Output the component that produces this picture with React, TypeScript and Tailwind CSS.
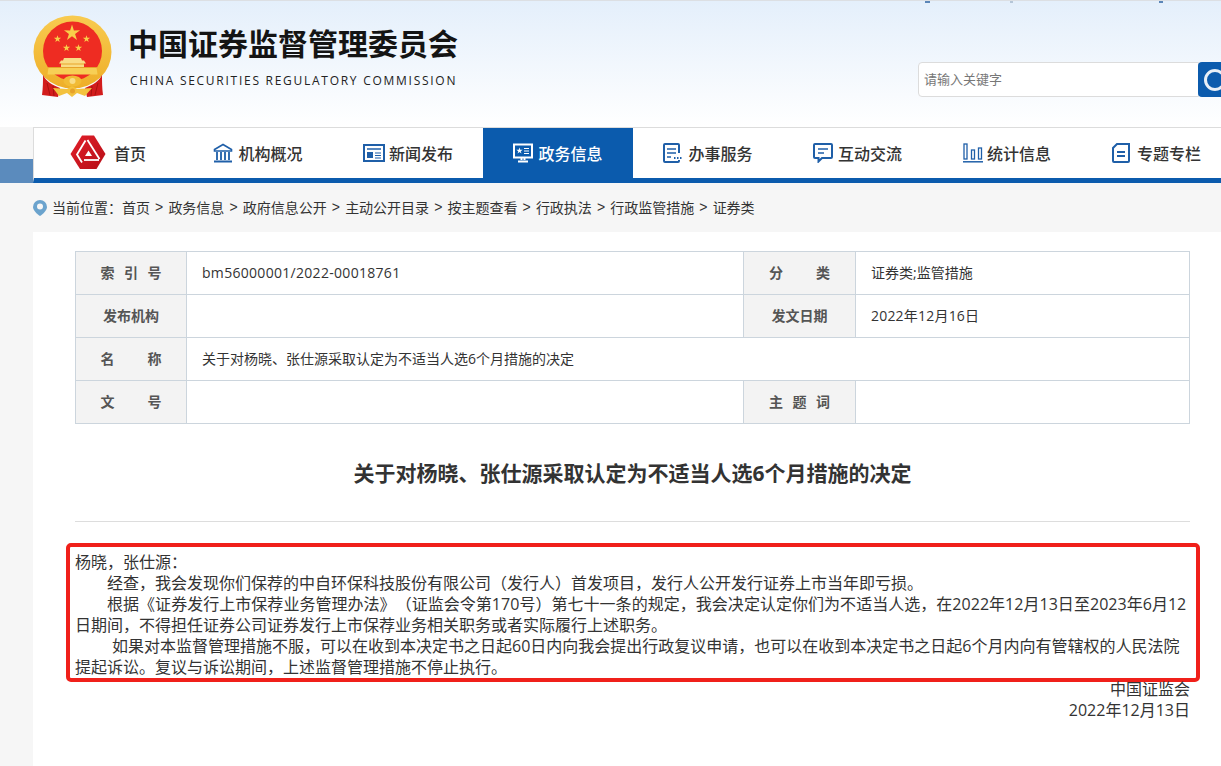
import React from 'react';

const cjk = 'font-["Open_Sans","Noto_Sans_CJK_SC",sans-serif]';

const starPoints = (cx: number, cy: number, r: number) => {
    const pts: string[] = [];
    for (let i = 0; i < 10; i++) {
        const rad = i % 2 === 0 ? r : r * 0.38;
        const a = (Math.PI / 5) * i - Math.PI / 2;
        pts.push(`${(cx + rad * Math.cos(a)).toFixed(2)},${(cy + rad * Math.sin(a)).toFixed(2)}`);
    }
    return pts.join(' ');
};

const Emblem = () => (
    <svg width="80" height="84" viewBox="0 0 80 84" className="shrink-0">
        <defs>
            <linearGradient id="gold" x1="0" y1="0" x2="0" y2="1">
                <stop offset="0" stopColor="#f8cb50" />
                <stop offset="1" stopColor="#eeae28" />
            </linearGradient>
        </defs>
        <ellipse cx="39.5" cy="37" rx="39" ry="36.500" fill="url(#gold)" />
        <circle cx="39.5" cy="36" r="29.5" fill="#ee2c22" />
        <polygon points={starPoints(39, 18, 8.5)} fill="#f8cf4a" />
        <polygon points={starPoints(24.5, 24, 3.8)} fill="#f8cf4a" />
        <polygon points={starPoints(53.5, 24, 3.8)} fill="#f8cf4a" />
        <polygon points={starPoints(33.5, 33, 3.8)} fill="#f8cf4a" />
        <polygon points={starPoints(45.5, 33, 3.8)} fill="#f8cf4a" />
        {/* gate */}
        <path d="M31 43h17l1 2.500h2l2 3h-2v3.500H28v-3.500h-2l2-3h2z" fill="#f9dc85" />
        <path d="M15.500 52h48l1 7.500H14.500z" fill="#f7cf55" />
        <path d="M28 49h23" stroke="#e8a52b" strokeWidth="1" />
        <path d="M16 52.500h47" stroke="#e6a22a" strokeWidth="1" />
        {/* drapes */}
        <path d="M10 60c3 6 9 10 17 13l-2 9-16-2c1-7 1-14 1-20z" fill="#d21c1c" />
        <path d="M69 60c-3 6-9 10-17 13l2 9 16-2c-1-7-1-14-1-20z" fill="#d21c1c" />
        <path d="M14 68l3 12M20 71l1 10M65 68l-3 12M59 71l-1 10" stroke="#a9120f" strokeWidth="1" />
        {/* ornament */}
        <path d="M20 73l14 1 5-3 5 3 15-1-7 8-8-3-5 4-5-4-8 3z" fill="#f3c23e" />
        <ellipse cx="39.500" cy="66" rx="9" ry="5.500" fill="#f1bb35" />
        <circle cx="39.500" cy="66" r="3" fill="#f9dc85" />
        <circle cx="39.500" cy="76" r="2.500" fill="#e6a22a" />
    </svg>
);

const CsrcLogo = () => (
    <svg width="39" height="35" viewBox="3 3.500 39 35" className="shrink-0">
        <defs>
            <linearGradient id="logoRed" x1="0" y1="0" x2="1" y2="1">
                <stop offset="0" stopColor="#e2202a" />
                <stop offset="1" stopColor="#b60d16" />
            </linearGradient>
        </defs>
        <path d="M15 4h12l11.500 18.500-9 15H13l-9.500-15z" fill="url(#logoRed)" />
        <path d="M18.500 9 10 23l5 8" fill="none" stroke="#fff" strokeWidth="1.800" />
        <path d="M20.500 8.500 32.500 27.500" fill="none" stroke="#fff" strokeWidth="1.800" />
        <path d="M32 28.500H17" fill="none" stroke="#fff" strokeWidth="1.800" />
        <path d="M21.500 19 25 24.500H18z" fill="#fff" />
    </svg>
);

const stroke = { fill: 'none', stroke: 'currentColor', strokeWidth: 2 };

const BankIcon = () => (
    <svg width="20" height="20" viewBox="0 0 20 20" className="shrink-0">
        <path d="M10 1.500 1.500 6.500v1.500h17V6.500z" {...stroke} strokeWidth={1.6} />
        <path d="M4 9v8M8 9v8M12 9v8M16 9v8" {...stroke} strokeWidth={1.8} />
        <path d="M1 18.500h18" {...stroke} />
    </svg>
);
const NewsIcon = () => (
    <svg width="22" height="18" viewBox="0 0 22 18" className="shrink-0">
        <rect x="1" y="1" width="20" height="16" {...stroke} />
        <path d="M4 5h14" {...stroke} strokeWidth={1.5} />
        <rect x="4" y="8" width="6" height="6" fill="currentColor" />
        <path d="M12 9h6M12 11.500h6M12 14h6" {...stroke} strokeWidth={1.2} />
    </svg>
);
const ScreenIcon = () => (
    <svg width="20" height="20" viewBox="0 0 20 20" className="shrink-0">
        <rect x="1" y="1.500" width="18" height="13" {...stroke} />
        <polygon points={starPoints(6.5, 7.8, 3.4)} fill="currentColor" />
        <path d="M11 5.500h5M11 8h5M11 10.500h5" {...stroke} strokeWidth={1.2} />
        <path d="M8.500 15v2M11.500 15v2M5 18.500h10" {...stroke} />
    </svg>
);
const ServiceIcon = () => (
    <svg width="21" height="20" viewBox="0 0 21 20" className="shrink-0">
        <path d="M16 10V2a1 1 0 0 0-1-1H2a1 1 0 0 0-1 1v16a1 1 0 0 0 1 1h13a1 1 0 0 0 1-1v-1" {...stroke} />
        <path d="M4 6h9M4 10h9M4 14h4" {...stroke} strokeWidth={1.6} />
        <path d="M11 15h1.500M14 15h1.500M17 15h1.500" {...stroke} strokeWidth={1.8} />
    </svg>
);
const ChatIcon = () => (
    <svg width="20" height="20" viewBox="0 0 20 20" className="shrink-0">
        <path d="M2 1h16a1 1 0 0 1 1 1v12a1 1 0 0 1-1 1H9l-3.500 3.500V15H2a1 1 0 0 1-1-1V2a1 1 0 0 1 1-1z" {...stroke} />
        <path d="M5 6h10M5 10h6" {...stroke} strokeWidth={1.6} />
    </svg>
);
const ChartIcon = () => (
    <svg width="20" height="20" viewBox="0 0 20 20" className="shrink-0">
        <rect x="1" y="1" width="3" height="15" {...stroke} strokeWidth={1.3} />
        <rect x="8.500" y="7" width="3" height="9" {...stroke} strokeWidth={1.3} />
        <rect x="15.500" y="5" width="3" height="11" {...stroke} strokeWidth={1.3} />
        <path d="M0 18.800h20" {...stroke} strokeWidth={1.5} />
    </svg>
);
const DocIcon = () => (
    <svg width="18" height="20" viewBox="0 0 18 20" className="shrink-0">
        <path d="M5 1h12v17a1 1 0 0 1-1 1H2a1 1 0 0 1-1-1V5z" {...stroke} />
        <path d="M5 9h8M5 13h8" {...stroke} strokeWidth={2} />
    </svg>
);

const navItems: { label: string; icon: React.ReactNode; gap: string; active?: boolean }[] = [
    { label: '首页', icon: <CsrcLogo />, gap: 'gap-[5px]' },
    { label: '机构概况', icon: <BankIcon />, gap: 'gap-[5px]' },
    { label: '新闻发布', icon: <NewsIcon />, gap: 'gap-[4px]' },
    { label: '政务信息', icon: <ScreenIcon />, gap: 'gap-[5px]', active: true },
    { label: '办事服务', icon: <ServiceIcon />, gap: 'gap-[4px]' },
    { label: '互动交流', icon: <ChatIcon />, gap: 'gap-[5px] pr-[1px]' },
    { label: '统计信息', icon: <ChartIcon />, gap: 'gap-[4px] pr-[2px]' },
    { label: '专题专栏', icon: <DocIcon />, gap: 'gap-[7px] pr-[3px]' },
];

const crumbs = ['首页', '政务信息', '政府信息公开', '主动公开目录', '按主题查看', '行政执法', '行政监管措施', '证券类'];

const labelCell = 'bg-[#f3f3f3] border border-[#ccd5dd] pb-[2px] text-center text-[14px] font-bold text-[#555]';
const valueCell = 'border border-[#ccd5dd] pl-[15px] pb-[2px] text-[14px] text-[#333]';

// spreads a short label's characters over a fixed width
const Spread = ({ chars }: { chars: string }) => (
    <div className="mx-auto w-[61px] flex justify-between">
        {chars.split('').map((c) => (
            <span key={c}>{c}</span>
        ))}
    </div>
);

export default function App() {
    return (
        <div className={`w-[1221px] h-[766px] overflow-hidden bg-[#f6f6f6] [text-spacing-trim:space-all] ${cjk}`}>
            {/* header */}
            <header className="relative h-[127px] border-t border-[#dcdfe3] bg-gradient-to-b from-[#e4effb] to-white flex">
                <div className="absolute left-[925px] top-0 w-[5px] h-[2px] bg-[#5b86b8]" />
                <div className="absolute left-[1010px] top-0 w-[3px] h-[2px] bg-[#b5c6d8]" />
                <div className="absolute left-[1159px] top-0 w-[4px] h-[2px] bg-[#5b86b8]" />
                <div className="flex items-start pl-[33px] pt-[14px] gap-[15px]">
                    <Emblem />
                    <div className="flex flex-col">
                        <h1 className="text-[30px] leading-[40px] mt-[7px] font-bold text-[#141414] whitespace-nowrap font-['Noto_Sans_CJK_SC',sans-serif]">中国证券监督管理委员会</h1>
                        <p className="font-['Open_Sans','Liberation_Sans',sans-serif] ml-[2px] text-[12px] leading-[16px] mt-[11px] tracking-[1.73px] text-[#222] whitespace-nowrap">CHINA SECURITIES REGULATORY COMMISSION</p>
                    </div>
                </div>
                <div className="ml-auto mt-[61px] flex h-[35px] w-[314px] -mr-[11px] shrink-0">
                    <div className="w-[281px] border border-[#dcdcdc] rounded-l-[4px] bg-white pl-[5px] text-[13px] leading-[33px] text-[#777]">请输入关键字</div>
                    <div className="flex-1 -ml-px rounded-[4px] bg-[#0b5bad] flex items-center pl-[6px]">
                        <div className="w-[22px] h-[22px] rounded-full border-[3px] border-white/90" />
                    </div>
                </div>
            </header>

            {/* nav */}
            <div className="flex h-[56px]">
                <div className="w-[33px] shrink-0 flex flex-col justify-end">
                    <div className="h-[24px] bg-[#5b8bbd]" />
                </div>
                <nav className="flex-1 bg-white border-t border-l border-[#dcdcdc] border-b-[5px] border-b-[#0b5bad] overflow-hidden">
                    <div className="flex h-full -ml-px">
                        {navItems.map((item) => (
                            <a
                                key={item.label}
                                className={`w-[150px] shrink-0 flex items-center justify-center pb-[1px] text-[16px] font-medium whitespace-nowrap font-['Noto_Sans_CJK_SC',sans-serif] ${item.gap} ${item.active ? 'bg-[#0b5bad] text-white font-bold' : 'text-[#1f5fa8]'}`}
                            >
                                {item.icon}
                                <span className={item.active ? 'text-white' : 'text-[#333]'}>{item.label}</span>
                            </a>
                        ))}
                    </div>
                </nav>
            </div>

            {/* breadcrumb */}
            <div className="h-[49px] pl-[33px] flex items-center text-[14px] text-[#333] whitespace-nowrap">
                <svg width="14" height="16" viewBox="0 0 14 16" className="shrink-0 mr-[5px]">
                    <path d="M7 0a7 7 0 0 1 7 7c0 3.500-4 7-7 9-3-2-7-5.500-7-9a7 7 0 0 1 7-7z" fill="#6ba3cd" />
                    <circle cx="7" cy="6.500" r="3" fill="#f6f6f6" />
                </svg>
                <span>当前位置：</span>
                {crumbs.map((c, i) => (
                    <React.Fragment key={c}>
                        <span>{c}</span>
                        {i < crumbs.length - 1 && <span className="mx-[5.1px] font-['Liberation_Sans',sans-serif]">&gt;</span>}
                    </React.Fragment>
                ))}
            </div>

            {/* content */}
            <main className="ml-[33px] bg-white h-[534px] pl-[42px] pt-[19px]">
                <table className="w-[1114px] border-collapse table-fixed">
                    <colgroup>
                        <col className="w-[111px]" />
                        <col className="w-[557px]" />
                        <col className="w-[112px]" />
                        <col className="w-[334px]" />
                    </colgroup>
                    <tbody>
                        <tr className="h-[43px]">
                            <td className={labelCell}><Spread chars="索引号" /></td>
                            <td className={`${valueCell} tracking-[0.3px]`}>bm56000001/2022-00018761</td>
                            <td className={labelCell}><Spread chars="分类" /></td>
                            <td className={valueCell}>证券类;监管措施</td>
                        </tr>
                        <tr className="h-[43px]">
                            <td className={labelCell}>发布机构</td>
                            <td className={valueCell}></td>
                            <td className={labelCell}>发文日期</td>
                            <td className={`${valueCell} tracking-[0.2px]`}>2022年12月16日</td>
                        </tr>
                        <tr className="h-[43px]">
                            <td className={labelCell}><Spread chars="名称" /></td>
                            <td className={valueCell} colSpan={3}>关于对杨晓、张仕源采取认定为不适当人选6个月措施的决定</td>
                        </tr>
                        <tr className="h-[43px]">
                            <td className={labelCell}><Spread chars="文号" /></td>
                            <td className={valueCell}></td>
                            <td className={labelCell}><Spread chars="主题词" /></td>
                            <td className={valueCell}></td>
                        </tr>
                    </tbody>
                </table>

                <h2 className="w-[1115px] text-center text-[21px] leading-[30px] font-bold text-[#333] mt-[34px]">关于对杨晓、张仕源采取认定为不适当人选6个月措施的决定</h2>
                <div className="w-[1115px] h-px bg-[#dddddd] mt-[33px]" />

                <div className="w-[1134px] -ml-[9px] mt-[21px] h-[139px] border-[4px] border-[#f0201a] rounded-[5px] pl-[5px] pt-[5px] text-[16px] leading-[21px] text-[#333] whitespace-nowrap">
                    <p>杨晓，张仕源：</p>
                    <p className="indent-[32px]">经查，我会发现你们保荐的中自环保科技股份有限公司（发行人）首发项目，发行人公开发行证券上市当年即亏损。</p>
                    <p className="indent-[32px] tracking-[0.035px]">根据《证券发行上市保荐业务管理办法》（证监会令第170号）第七十一条的规定，我会决定认定你们为不适当人选，在2022年12月13日至2023年6月12</p>
                    <p>日期间，不得担任证券公司证券发行上市保荐业务相关职务或者实际履行上述职务。</p>
                    <p className="indent-[37px]">如果对本监督管理措施不服，可以在收到本决定书之日起60日内向我会提出行政复议申请，也可以在收到本决定书之日起6个月内向有管辖权的人民法院</p>
                    <p>提起诉讼。复议与诉讼期间，上述监督管理措施不停止执行。</p>
                </div>

                <div className="w-[1115px] -mt-[3px] text-right text-[16px] leading-[21px] text-[#333]">
                    <p>中国证监会</p>
                    <p>2022年12月13日</p>
                </div>
            </main>
        </div>
    );
}
